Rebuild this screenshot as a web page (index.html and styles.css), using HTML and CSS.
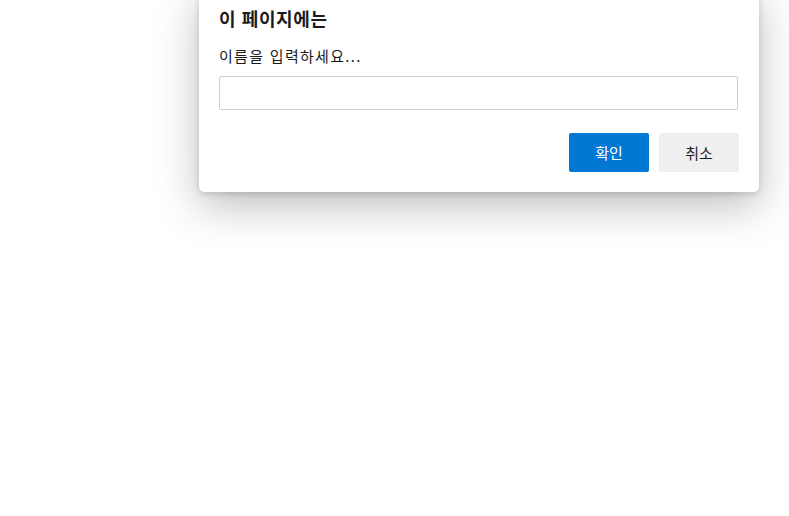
FILE: index.html
```html
<!DOCTYPE html>
<html lang="ko">
<head>
<meta charset="utf-8">
<title>Prompt</title>
<link rel="stylesheet" href="styles.css">
</head>
<body>
<div class="dialog">
  <div class="title">이 페이지에는</div>
  <div class="message">이름을 입력하세요...</div>
  <input class="field" type="text">
  <div class="actions">
    <button class="btn primary">확인</button>
    <button class="btn secondary">취소</button>
  </div>
</div>
</body>
</html>
```
FILE: styles.css
```css
html, body {
  margin: 0;
  padding: 0;
  background: #ffffff;
  width: 789px;
  height: 516px;
  overflow: hidden;
  font-family: "Noto Sans CJK KR", "Noto Sans", sans-serif;
}
.dialog {
  position: absolute;
  left: 199px;
  top: -14px;
  width: 520px;
  padding: 20px;
  background: #fff;
  border-radius: 5px;
  box-shadow: 0 14px 44px rgba(0, 0, 0, 0.26), 0 2px 6px rgba(0, 0, 0, 0.15);
  display: flex;
  flex-direction: column;
}
.title {
  font-size: 18px;
  font-weight: 700;
  line-height: 24px;
  letter-spacing: 0.6px;
  color: #1b1b1b;
}
.message {
  margin-top: 15px;
  font-size: 15px;
  line-height: 21px;
  letter-spacing: 1.3px;
  color: #1b1b1b;
}
.field {
  margin: 10px 0 0 0;
  box-sizing: border-box;
  width: 519px;
  height: 34px;
  border: 1px solid #cfcfcf;
  border-radius: 2px;
  padding: 0 8px;
  font-family: inherit;
  font-size: 15px;
  outline: none;
}
.actions {
  margin-top: 23px;
  display: flex;
  justify-content: flex-end;
  gap: 10px;
}
.btn {
  width: 80px;
  height: 39px;
  border: none;
  border-radius: 2px;
  font-family: inherit;
  font-size: 15px;
  padding: 0;
}
.primary {
  background: #0078d4;
  color: #fff;
}
.secondary {
  background: #efefef;
  color: #1b1b1b;
}
```
